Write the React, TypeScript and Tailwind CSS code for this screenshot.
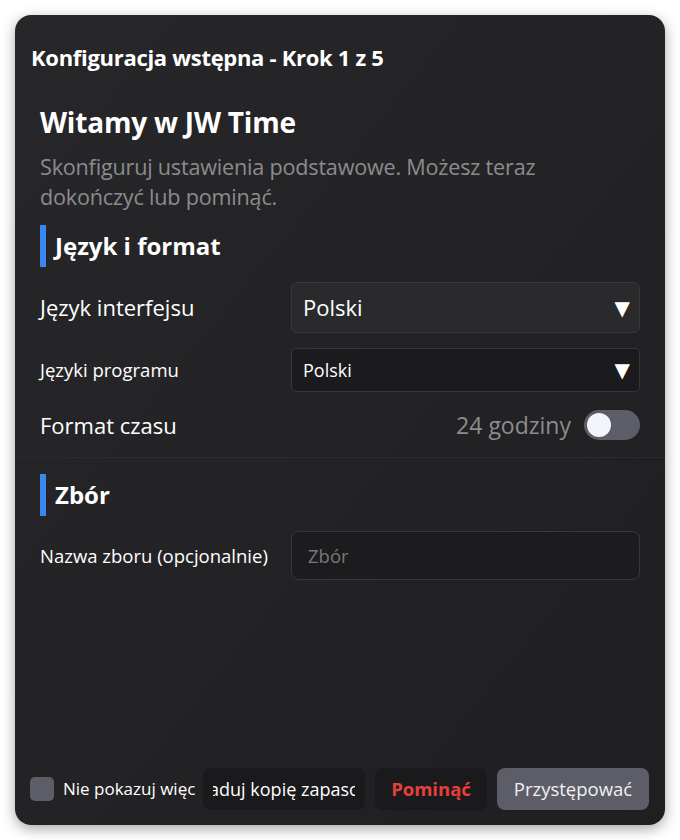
import React from "react";

const font = { fontFamily: '"Open Sans", "Noto Sans", sans-serif' };
const tri = { fontFamily: '"DejaVu Sans", sans-serif' };

function SectionHeader({ title }: { title: string }) {
  return (
    <div className="flex items-center h-[42px]">
      <div className="w-[6px] h-full bg-[#3b87f0]" />
      <div className="ml-[9px] text-[24px] font-bold text-white leading-none">{title}</div>
    </div>
  );
}

export default function App() {
  return (
    <div className="w-[680px] h-[840px] bg-white p-[15px]" style={font}>
      <div className="w-[650px] h-[810px] rounded-[16px] bg-gradient-to-br from-[#27272a] via-[#232325] to-[#1f1f21] shadow-[0_4px_14px_rgba(0,0,0,0.35)] flex flex-col overflow-hidden">
        <div className="pt-[29px] pl-[16px] h-[88px]">
          <div className="text-[22px] font-bold text-white leading-[26px] tracking-[-0.3px]">
            Konfiguracja wstępna - Krok 1 z 5
          </div>
        </div>
        <div className="px-[25px] flex flex-col flex-1">
          <div className="text-[28px] font-bold text-white leading-[38px] tracking-[-0.2px]">Witamy w JW Time</div>
          <div className="mt-[11px] text-[21.6px] text-[#8c8c8e] leading-[30px] tracking-[-0.2px]">
            Skonfiguruj ustawienia podstawowe. Możesz teraz dokończyć lub pominąć.
          </div>
          <div className="mt-[13px]">
            <SectionHeader title="Język i format" />
          </div>
          <div className="mt-[15px] flex items-center">
            <div className="w-[251px] text-[22px] text-white">Język interfejsu</div>
            <div className="flex-1 h-[51px] rounded-[6px] border border-[#38383b] bg-[#2a2a2c] flex items-center justify-between pl-[11px] pr-[9px]">
              <span className="text-[22px] text-white">Polski</span>
              <span className="text-[20px] text-white" style={tri}>▼</span>
            </div>
          </div>
          <div className="mt-[15px] flex items-center">
            <div className="w-[251px] text-[18.5px] text-white">Języki programu</div>
            <div className="flex-1 h-[44px] rounded-[5px] border border-[#36363a] bg-[#1b1b1d] flex items-center justify-between pl-[11px] pr-[9px]">
              <span className="text-[18px] text-white">Polski</span>
              <span className="text-[20px] text-white" style={tri}>▼</span>
            </div>
          </div>
          <div className="mt-[18px] flex items-center justify-between h-[30px]">
            <div className="text-[22px] text-white">Format czasu</div>
            <div className="flex items-center gap-[13px]">
              <span className="text-[23px] text-[#8c8c8e]">24 godziny</span>
              <div className="w-[56px] h-[30px] rounded-full bg-[#5c5d66] flex items-center px-[3px]">
                <div className="w-[24px] h-[24px] rounded-full bg-[#f4f5fb]" />
              </div>
            </div>
          </div>
          <div className="mt-[17px] -mx-[25px] h-px bg-[#2c2c2f]" />
          <div className="mt-[16px]">
            <SectionHeader title="Zbór" />
          </div>
          <div className="mt-[15px] flex items-center">
            <div className="w-[251px] text-[18.5px] text-white">Nazwa zboru (opcjonalnie)</div>
            <div className="flex-1 h-[49px] rounded-[8px] border border-[#38383b] bg-[#1c1c1e] flex items-center px-[16px]">
              <span className="text-[18.5px] text-[#77777a]">Zbór</span>
            </div>
          </div>
          <div className="flex-1" />
        </div>
        <div className="h-[57px] flex items-start pl-[15px] pr-[16px]">
          <div className="w-[165px] h-[42px] flex items-center overflow-hidden whitespace-nowrap">
            <div className="w-[24px] h-[24px] shrink-0 rounded-[5px] bg-[#5c5d66]" />
            <span className="ml-[9px] text-[17px] text-white">Nie pokazuj więcej</span>
          </div>
          <div className="ml-[8px] w-[162px] h-[42px] rounded-[8px] bg-[#1a1a1c] px-[10px] flex">
            <div className="w-full overflow-hidden flex items-center justify-center whitespace-nowrap">
              <span className="text-[18px] text-white shrink-0">Załaduj kopię zapasową</span>
            </div>
          </div>
          <div className="ml-[10px] w-[112px] h-[42px] rounded-[8px] bg-[#1a1a1c] flex items-center justify-center">
            <span className="text-[18.5px] font-bold text-[#e5413b]">Pominąć</span>
          </div>
          <div className="ml-[10px] w-[152px] h-[42px] rounded-[8px] bg-[#5c5d66] flex items-center justify-center">
            <span className="text-[18.5px] text-[#f0f0f3] whitespace-nowrap">Przystępować</span>
          </div>
        </div>
      </div>
    </div>
  );
}
